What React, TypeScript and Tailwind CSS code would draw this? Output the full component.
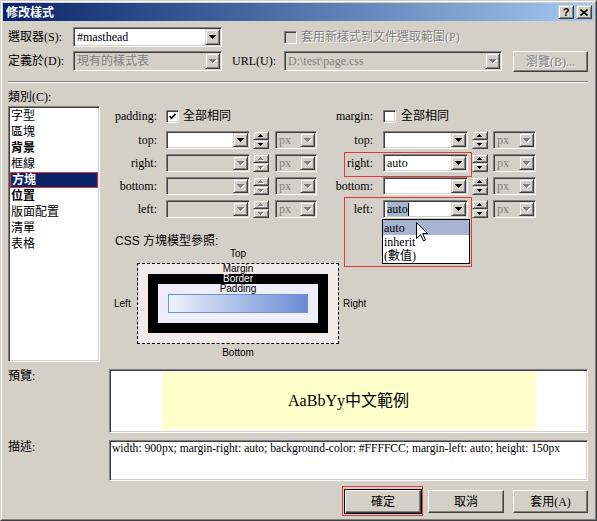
import React from 'react';

const sunken =
  'border border-t-[#808080] border-l-[#808080] border-b-white border-r-white p-px shadow-[inset_1px_1px_0_#404040,inset_-1px_-1px_0_#d4d0c8]';
const raised =
  'border border-t-white border-l-white border-b-[#404040] border-r-[#404040] shadow-[inset_-1px_-1px_0_#808080]';
const knob =
  'bg-[#d4d0c8] border border-t-[#d4d0c8] border-l-[#d4d0c8] border-b-[#404040] border-r-[#404040] shadow-[inset_1px_1px_0_#fff,inset_-1px_-1px_0_#808080]';
const grayed = 'text-[#808080] [text-shadow:1px_1px_0_#fff]';

function Tri({ up = false, w = 7, h = 4, off = false }: { up?: boolean; w?: number; h?: number; off?: boolean }) {
  const pts = up ? `0,${h} ${w},${h} ${w / 2},0` : `0,0 ${w},0 ${w / 2},${h}`;
  return (
    <svg width={w + 1} height={h + 1} className="block" shapeRendering="crispEdges">
      {off && <polygon points={pts} fill="#fff" transform="translate(1 1)" />}
      <polygon points={pts} fill={off ? '#808080' : '#000'} />
    </svg>
  );
}

function Combo({
  className = '',
  off = false,
  text,
  children,
}: {
  className?: string;
  off?: boolean;
  text?: string;
  children?: React.ReactNode;
}) {
  return (
    <div className={`${sunken} flex shrink-0 ${off ? 'bg-[#d4d0c8]' : 'bg-white'} ${className}`}>
      <div
        className={`flex-1 min-w-0 flex items-center pl-[2px] whitespace-nowrap overflow-hidden ${
          off ? 'text-[#808080]' : 'text-black'
        }`}
      >
        {children ?? text}
      </div>
      <div className={`${knob} w-[15px] shrink-0 flex items-center justify-center`}>
        <Tri off={off} />
      </div>
    </div>
  );
}

function Spin({ off = false }: { off?: boolean }) {
  return (
    <div className="w-[16px] h-full shrink-0 flex flex-col">
      <div className={`${knob} flex-1 flex items-center justify-center`}>
        <Tri up w={5} h={3} off={off} />
      </div>
      <div className={`${knob} flex-1 flex items-center justify-center`}>
        <Tri w={5} h={3} off={off} />
      </div>
    </div>
  );
}

function Check({ checked = false, off = false }: { checked?: boolean; off?: boolean }) {
  return (
    <div className={`${sunken} w-[13px] h-[13px] shrink-0 flex items-center justify-center ${off ? 'bg-[#d4d0c8]' : 'bg-white'}`}>
      {checked && (
        <svg width="7" height="7" viewBox="0 0 7 7" className="block">
          <path d="M0.5 3 L2.5 5.2 L6.5 1" fill="none" stroke="#000" strokeWidth="1.7" />
        </svg>
      )}
    </div>
  );
}

const cats = [
  { t: '字型' },
  { t: '區塊' },
  { t: '背景', b: true },
  { t: '框線' },
  { t: '方塊', b: true, sel: true },
  { t: '位置', b: true },
  { t: '版面配置' },
  { t: '清單' },
  { t: '表格' },
];

const sides = ['top:', 'right:', 'bottom:', 'left:'];

export default function App() {
  return (
    <div className="w-[597px] h-[521px] bg-[#d4d0c8] border border-t-[#d4d0c8] border-l-[#d4d0c8] border-b-[#404040] border-r-[#404040] font-['Liberation_Serif','Noto_Sans_CJK_TC',serif] text-[12px] leading-[14px] text-black">
      <div className="w-full h-full border border-t-white border-l-white border-b-[#808080] border-r-[#808080] p-px flex flex-col">
        {/* title bar */}
        <div className="h-[18px] shrink-0 bg-gradient-to-r from-[#0a246a] to-[#a6caf0] flex items-center pl-[3px] pr-[2px]">
          <span className="text-white font-bold font-['Noto_Sans_CJK_TC',sans-serif] text-[12px] leading-none">修改樣式</span>
          <div className="ml-auto flex gap-[2px]">
            <div className={`${knob} w-[16px] h-[14px] flex items-center justify-center font-['Liberation_Sans',sans-serif] font-bold text-[11px] leading-none`}>
              ?
            </div>
            <div className={`${knob} w-[16px] h-[14px] flex items-center justify-center`}>
              <svg width="8" height="7" viewBox="0 0 8 7" className="block">
                <path d="M0.5 0.5 L7.5 6.5 M7.5 0.5 L0.5 6.5" stroke="#000" strokeWidth="1.6" />
              </svg>
            </div>
          </div>
        </div>

        <div className="flex-1 pl-[5px] pr-[6px] flex flex-col">
          {/* selector row */}
          <div className="mt-[6px] h-[20px] flex items-center">
            <div className="w-[65px]">選取器(S):</div>
            <Combo className="w-[149px] h-[20px]" text="#masthead" />
            <div className="ml-[62px]">
              <Check off />
            </div>
            <div className={`ml-[4px] ${grayed}`}>套用新樣式到文件選取範圍(P)</div>
          </div>

          {/* define-in row */}
          <div className="mt-[4px] h-[21px] flex items-start">
            <div className="w-[65px] h-[20px] flex items-center">定義於(D):</div>
            <Combo off className="w-[149px] h-[20px]" text="現有的樣式表" />
            <div className="ml-[10px] w-[52px] h-[20px] flex items-center">URL(U):</div>
            <Combo off className="w-[218px] h-[20px]" text="D:\test\page.css" />
            <div className={`${raised} ml-[11px] w-[75px] h-[21px] flex items-center justify-center ${grayed}`}>瀏覽(B)...</div>
          </div>

          <div className="mt-[9px] h-[2px] border-t border-t-[#808080] border-b border-b-white" />

          {/* main area */}
          <div className="mt-[7px] flex">
            <div className="w-[92px] shrink-0 flex flex-col">
              <div className="h-[14px]">類別(C):</div>
              <div className={`${sunken} mt-[2px] h-[256px] bg-white flex flex-col`}>
                {cats.map((c) => (
                  <div
                    key={c.t}
                    className={`h-[16px] flex items-center pl-px ${c.b ? 'font-bold' : ''} ${
                      c.sel ? 'bg-[#0a246a] text-white border border-[#e0393b]' : ''
                    }`}
                  >
                    {c.t}
                  </div>
                ))}
              </div>
            </div>

            <div className="ml-[8px] flex-1 pt-[17px] flex flex-col">
              <div className="flex">
                {/* padding side */}
                <div className="w-[209px] flex flex-col">
                  <div className="h-[18px] flex items-center">
                    <div className="w-[49px] text-right">padding:</div>
                    <div className="ml-[9px]">
                      <Check checked />
                    </div>
                    <div className="ml-[4px]">全部相同</div>
                  </div>
                  <div className="mt-[6px] flex flex-col gap-[5px]">
                    {sides.map((s, i) => (
                      <div key={s} className="h-[18px] flex items-center">
                        <div className="w-[49px] text-right">{s}</div>
                        <Combo off={i > 0} className="ml-[9px] w-[84px] h-[18px]" />
                        <div className="ml-[3px] h-full">
                          <Spin off={i > 0} />
                        </div>
                        <Combo off className="ml-[6px] w-[42px] h-[18px]" text="px" />
                      </div>
                    ))}
                  </div>
                </div>

                {/* margin side */}
                <div className="relative flex-1 flex flex-col">
                  <div className="h-[18px] flex items-center">
                    <div className="w-[56px] text-right">margin:</div>
                    <div className="ml-[10px]">
                      <Check />
                    </div>
                    <div className="ml-[5px]">全部相同</div>
                  </div>
                  <div className="mt-[6px] flex flex-col gap-[5px]">
                    {sides.map((s) => (
                      <div key={s} className="h-[18px] flex items-center">
                        <div className="w-[56px] text-right">{s}</div>
                        <Combo className="ml-[10px] w-[85px] h-[18px]">
                          {s === 'right:' && <span>auto</span>}
                          {s === 'left:' && (
                            <>
                              <span className="bg-[#a6b4d2]">auto</span>
                              <span className="w-px h-[13px] bg-black" />
                            </>
                          )}
                        </Combo>
                        <div className="ml-[4px] h-full">
                          <Spin />
                        </div>
                        <Combo off className="ml-[5px] w-[43px] h-[18px]" text="px" />
                      </div>
                    ))}
                  </div>

                  <div className="absolute left-[27px] top-[45px] w-[128px] h-[25px] border border-[#e0393b]" />
                  <div className="absolute left-[27px] top-[90px] w-[128px] h-[70px] border border-[#e0393b]" />

                  <div className="absolute left-[65px] top-[112px] w-[88px] bg-white border border-black flex flex-col">
                    <div className="h-[15px] pl-px flex items-center bg-[#a6b4d2]">auto</div>
                    <div className="h-[14px] pl-px flex items-center">inherit</div>
                    <div className="h-[14px] pl-px flex items-center">(數值)</div>
                  </div>

                  <svg width="13" height="20" viewBox="0 0 13 20" className="absolute left-[99px] top-[115px]">
                    <path
                      d="M0.5 0.5 L0.5 16.5 L4.5 12.5 L7.5 19 L9.5 18 L6.7 11.5 L11.5 11.5 Z"
                      fill="#fff"
                      stroke="#000"
                      strokeWidth="1"
                    />
                  </svg>
                </div>
              </div>

              <div className="mt-[16px] pl-[7px] h-[14px] font-['Liberation_Sans','Noto_Sans_CJK_TC',sans-serif]">CSS 方塊模型參照:</div>

              {/* box model reference */}
              <div className="ml-[6px] grid grid-cols-[23px_202px_auto] grid-rows-[12px_81px_12px] gap-y-[3px] font-['Liberation_Sans',sans-serif] text-[10px] leading-[12px]">
                <div />
                <div className="text-center">Top</div>
                <div />
                <div className="flex items-center">Left</div>
                <div className="border border-dashed border-black bg-[#f3eaea] flex flex-col px-[10px] pb-[10px]">
                  <div className="h-[10px] leading-[10px] text-center">Margin</div>
                  <div className="flex-1 bg-black flex flex-col px-[10px] pb-[10px]">
                    <div className="h-[10px] leading-[10px] text-center text-white">Border</div>
                    <div className="flex-1 bg-[#eeeefa] flex flex-col px-[10px] pb-[10px]">
                      <div className="h-[10px] leading-[10px] text-center">Padding</div>
                      <div className="flex-1 border border-[#7090d0] bg-gradient-to-r from-[#eef2fc] to-[#6a8cd4]" />
                    </div>
                  </div>
                </div>
                <div className="flex items-center pl-[4px]">Right</div>
                <div />
                <div className="text-center">Bottom</div>
                <div />
              </div>
            </div>
          </div>

          {/* preview */}
          <div className="mt-[7px] flex">
            <div className="w-[101px] shrink-0">預覽:</div>
            <div className={`${sunken} flex-1 h-[64px] bg-white flex justify-center pt-[2px]`}>
              <div className="w-[374px] h-[57px] bg-[#ffffcc] flex items-center justify-center text-[16px] leading-[20px]">
                AaBbYy中文範例
              </div>
            </div>
          </div>

          {/* description */}
          <div className="mt-[7px] flex">
            <div className="w-[101px] shrink-0">描述:</div>
            <div className={`${sunken} flex-1 h-[41px] bg-white pl-[2px] pt-px whitespace-nowrap overflow-hidden text-[11.6px]`}>
              width: 900px; margin-right: auto; background-color: #FFFFCC; margin-left: auto; height: 150px
            </div>
          </div>

          {/* buttons */}
          <div className="mt-[9px] h-[23px] flex items-center justify-end">
            <div className="relative w-[78px] h-[25px] border border-black mr-[6px]">
              <div className={`${raised} w-full h-full bg-[#d4d0c8] flex items-center justify-center`}>確定</div>
              <div className="absolute -left-[3px] -right-[2px] -top-[4px] -bottom-[3px] border border-[#e0393b]" />
            </div>
            <div className={`${raised} w-[76px] h-[23px] mr-[9px] flex items-center justify-center`}>取消</div>
            <div className={`${raised} w-[75px] h-[23px] flex items-center justify-center`}>套用(A)</div>
          </div>
        </div>
      </div>
    </div>
  );
}
